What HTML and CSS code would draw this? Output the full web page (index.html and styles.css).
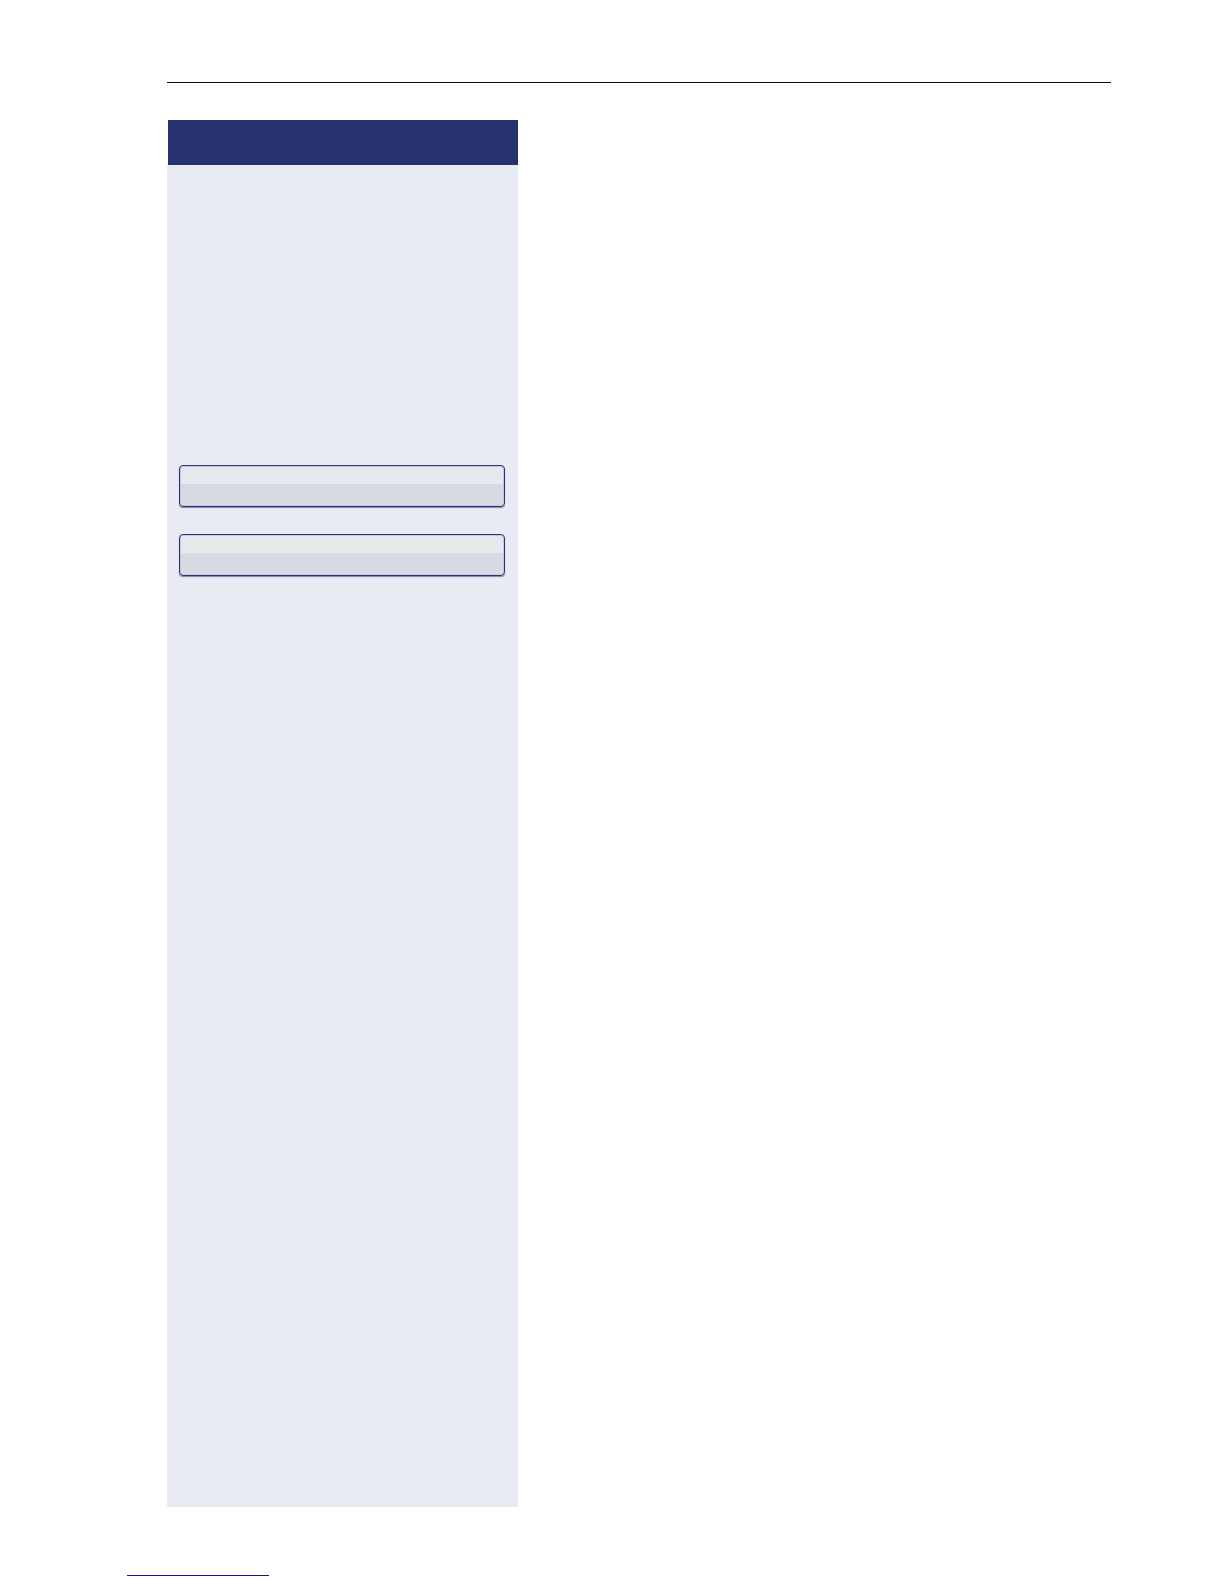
FILE: index.html
```html
<!DOCTYPE html>
<html lang="en">
<head>
<meta charset="utf-8">
<meta name="viewport" content="width=device-width, initial-scale=1">
<title>Manual page</title>
<link rel="stylesheet" href="styles.css">
</head>
<body>
<div class="page">
  <hr class="page-rule">
  <main class="content">
    <aside class="sidebar">
      <header class="sidebar-header"></header>
      <div class="sidebar-body">
        <button type="button" class="display-key"></button>
        <button type="button" class="display-key"></button>
      </div>
    </aside>
    <section class="description"></section>
  </main>
</div>
<footer class="footer">
  <hr class="footer-rule">
</footer>
</body>
</html>
```

FILE: styles.css
```css
* {
  box-sizing: border-box;
}

body {
  display: flex;
  flex-direction: column;
  min-height: 100vh;
  margin: 0;
  background: #fff;
  font-family: "Liberation Sans", Arial, sans-serif;
}

.page {
  display: flex;
  flex: 1;
  flex-direction: column;
  gap: 37px;
  padding: 82px 113px 0 167px;
}

.page-rule {
  width: 100%;
  height: 1px;
  margin: 0;
  border: 0;
  background: #0c0c14;
}

.content {
  display: grid;
  flex: 1;
  grid-template-columns: 351px 1fr;
}

.sidebar {
  display: flex;
  flex-direction: column;
}

.sidebar-header {
  height: 45px;
  margin-left: 1px;
  background: #26336e;
}

.sidebar-body {
  display: flex;
  flex: 1;
  flex-direction: column;
  gap: 27px;
  padding: 300px 13px 0 12px;
  background: #e8ebf4;
}

.display-key {
  width: 100%;
  height: 42px;
  padding: 0;
  border: 1px solid #303668;
  border-radius: 4px;
  background: linear-gradient(#e3e7ec, #e8ebec 18px, #d5d9e1 18px, #d9dce3);
  box-shadow: inset 0 0 0 1px #c2c7e6, 0 1px 1px #8085b0;
}

.footer {
  padding: 68px 127px 8px;
}

.footer-rule {
  width: 142px;
  height: 1px;
  margin: 0;
  border: 0;
  background: #1212a0;
}
```
